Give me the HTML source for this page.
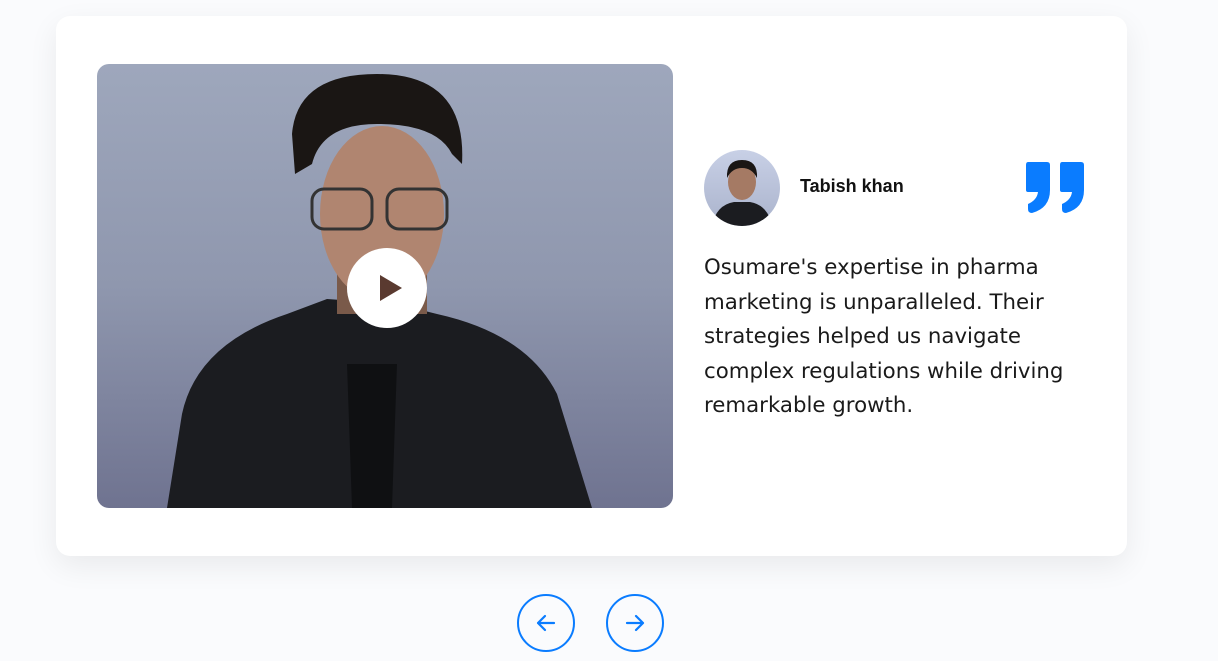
<!DOCTYPE html>
<html><head><style>
html,body{margin:0;padding:0;width:1218px;height:661px;overflow:hidden;background:#fafbfd;font-family:"Liberation Sans",sans-serif}
.card{position:absolute;left:56px;top:16px;width:1071px;height:540px;background:#fff;border-radius:14px;box-shadow:0 10px 30px rgba(0,0,0,0.07)}
.vid{position:absolute;left:97px;top:64px;width:576px;height:444px;border-radius:12px;overflow:hidden;background:linear-gradient(#9ea7bc,#8f97ae 50%,#6f7390)}
.play{position:absolute;left:347px;top:248px;width:80px;height:80px;border-radius:50%;background:#fff}
.av{position:absolute;left:704px;top:150px;width:76px;height:76px;border-radius:50%;overflow:hidden;background:linear-gradient(#c8d0e6,#aab3cc)}
.name{position:absolute;left:800px;top:176px;font-weight:bold;font-size:18px;color:#111}
.txt{position:absolute;left:704px;top:251px;width:400px;line-height:34.5px;color:#1a1a1a;font-family:"DejaVu Sans","Liberation Sans",sans-serif;font-size:21.3px;letter-spacing:0}
.btn{position:absolute;top:594px;width:54px;height:54px;border:2px solid #0a7cff;border-radius:50%}
</style></head><body>
<div class="card"></div>
<div class="vid">
<svg width="576" height="444" viewBox="0 0 576 444">
<path d="M70 444 L85 350 Q100 280 190 250 L230 235 L300 240 L340 250 Q430 270 460 330 L495 444Z" fill="#1b1c20"/>
<path d="M250 300 L300 300 L295 444 L255 444Z" fill="#0f1012"/>
<rect x="240" y="170" width="90" height="80" fill="#7a5a4a"/>
<ellipse cx="285" cy="150" rx="62" ry="88" fill="#b08570"/>
<path d="M195 70 Q200 10 280 10 Q370 10 365 100 L355 90 Q340 60 280 60 Q225 60 215 100 L198 110Z" fill="#1a1614"/>
<rect x="215" y="125" width="60" height="40" rx="12" fill="none" stroke="#333" stroke-width="3"/>
<rect x="290" y="125" width="60" height="40" rx="12" fill="none" stroke="#333" stroke-width="3"/>
</svg>
</div>
<div class="play"><svg width="80" height="80"><path d="M33 27 L55 40 L33 53Z" fill="#5a3a30"/></svg></div>
<div class="av"><svg width="76" height="76"><path d="M8 76 Q12 55 30 52 L46 52 Q64 55 68 76Z" fill="#1b1c20"/><ellipse cx="38" cy="32" rx="14" ry="18" fill="#a57a64"/><path d="M23 28 Q22 10 38 10 Q54 10 53 28 Q48 18 38 18 Q28 18 23 28Z" fill="#1a1614"/></svg></div>
<div class="name">Tabish khan</div>
<svg style="position:absolute;left:1024px;top:160px" width="62" height="54" viewBox="0 0 62 54">
<path d="M4 2 H23 Q26 2 26 5 V30 Q26 48 8 53 Q4 53 4 49 V44 Q13 40 14 32 H4 Q2 32 2 30 V5 Q2 2 4 2Z" fill="#0a7cff"/>
<path d="M38 2 H57 Q60 2 60 5 V30 Q60 48 42 53 Q38 53 38 49 V44 Q47 40 48 32 H38 Q36 32 36 30 V5 Q36 2 38 2Z" fill="#0a7cff"/>
</svg>
<div class="txt">Osumare's expertise in pharma marketing is unparalleled. Their strategies helped us navigate complex regulations while driving remarkable growth.</div>
<div class="btn" style="left:517px"><svg width="54" height="54"><path d="M35 27 H19 M26 20 L19 27 L26 34" fill="none" stroke="#0a7cff" stroke-width="2.2" stroke-linecap="round" stroke-linejoin="round"/></svg></div>
<div class="btn" style="left:606px"><svg width="54" height="54"><path d="M19 27 H35 M28 20 L35 27 L28 34" fill="none" stroke="#0a7cff" stroke-width="2.2" stroke-linecap="round" stroke-linejoin="round"/></svg></div>
</body></html>
